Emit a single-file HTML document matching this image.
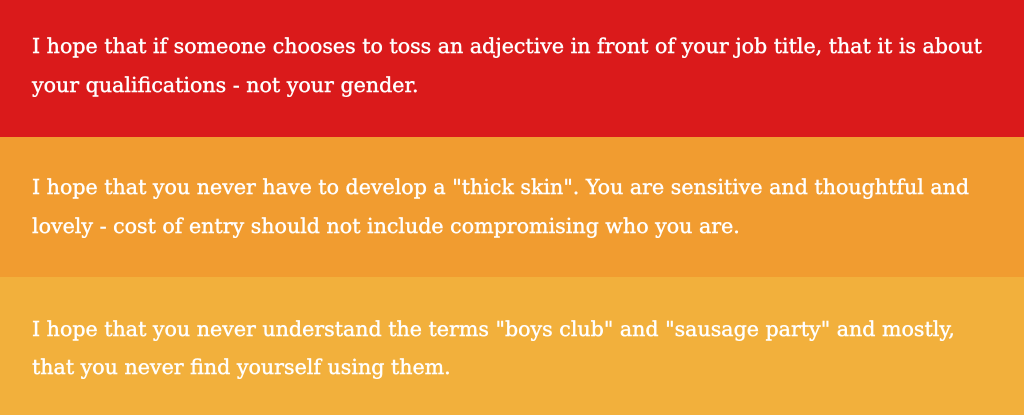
<!DOCTYPE html>
<html><head><style>
html,body{margin:0;padding:0;width:1024px;height:415px;overflow:hidden}
.b{position:absolute;left:0;width:1024px;color:#fff;font-family:"DejaVu Serif",serif;font-size:20.6px;line-height:39px;-webkit-text-stroke:0.4px #fff}
.b div{position:absolute;left:32px;white-space:nowrap;letter-spacing:0px}
</style></head><body>
<div class="b" style="top:0;height:137px;background:#da1a1b">
<div style="top:27px">I hope that if someone chooses to toss an adjective in front of your job title, that it is about</div>
<div style="top:66px">your qualifications - not your gender.</div>
</div>
<div class="b" style="top:137px;height:140px;background:#f19c30">
<div style="top:31px">I hope that you never have to develop a "thick skin". You are sensitive and thoughtful and</div>
<div style="top:70px">lovely - cost of entry should not include compromising who you are.</div>
</div>
<div class="b" style="top:277px;height:138px;background:#f2b03c">
<div style="top:33px">I hope that you never understand the terms "boys club" and "sausage party" and mostly,</div>
<div style="top:71px">that you never find yourself using them.</div>
</div>
</body></html>
